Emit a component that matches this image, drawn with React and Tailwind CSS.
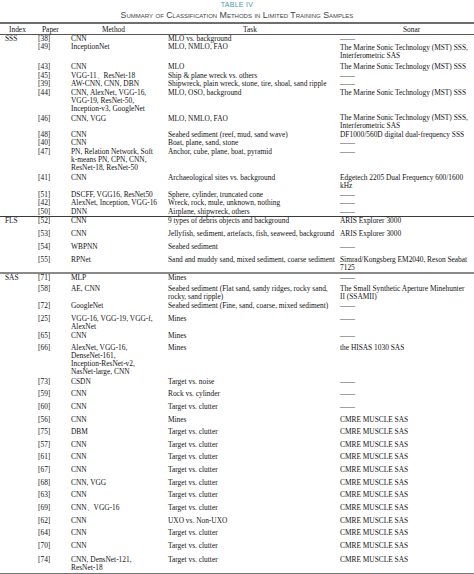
const SECTIONS = [
    {
        index: 'SSS',
        rule: 'h-px bg-[#3a3a3a]',
        rows: [
            { h: 'h-[8px]', p: '[38]', m: ['CNN'], t: ['MLO vs. background'], s: ['——'] },
            { h: 'h-[20px]', p: '[49]', m: ['InceptionNet'], t: ['MLO, NMLO, FAO'], s: ['The Marine Sonic Technology (MST) SSS,', 'Interferometric SAS'], sTop: 'pt-[1px]' },
            { h: 'h-[9px]', p: '[43]', m: ['CNN'], t: ['MLO'], s: ['The Marine Sonic Technology (MST) SSS'] },
            { h: 'h-[8px]', p: '[45]', m: ['VGG-11、ResNet-18'], t: ['Ship & plane wreck vs. others'], s: ['——'] },
            { h: 'h-[9px]', p: '[39]', m: ['AW-CNN, CNN, DBN'], t: ['Shipwreck, plain wreck, stone, tire, shoal, sand ripple'], s: ['——'] },
            { h: 'h-[26px]', p: '[44]', m: ['CNN, AlexNet, VGG-16,', 'VGG-19, ResNet-50,', 'Inception-v3, GoogleNet'], t: ['MLO, OSO, background'], s: ['The Marine Sonic Technology (MST) SSS'] },
            { h: 'h-[16px]', p: '[46]', m: ['CNN, VGG'], t: ['MLO, NMLO, FAO'], s: ['The Marine Sonic Technology (MST) SSS,', 'Interferometric SAS'], sTop: '-mt-[1px]' },
            { h: 'h-[8px]', p: '[48]', m: ['CNN'], t: ['Seabed sediment (reef, mud, sand wave)'], s: ['DF1000/560D digital dual-frequency SSS'] },
            { h: 'h-[9px]', p: '[40]', m: ['CNN'], t: ['Boat, plane, sand, stone'], s: ['——'] },
            { h: 'h-[26px]', p: '[47]', m: ['PN, Relation Network, Soft', 'k-means PN, CPN, CNN,', 'ResNet-18, ResNet-50'], t: ['Anchor, cube, plane, boat, pyramid'], s: ['——'] },
            { h: 'h-[17px]', p: '[41]', m: ['CNN'], t: ['Archaeological sites vs. background'], s: ['Edgetech 2205 Dual Frequency 600/1600', 'kHz'] },
            { h: 'h-[8px]', p: '[51]', m: ['DSCFF, VGG16, ResNet50'], t: ['Sphere, cylinder, truncated cone'], s: ['——'] },
            { h: 'h-[9px]', p: '[42]', m: ['AlexNet, Inception, VGG-16'], t: ['Wreck, rock, mule, unknown, nothing'], s: ['——'] },
            { h: 'h-[8px]', p: '[50]', m: ['DNN'], t: ['Airplane, shipwreck, others'], s: ['——'] },
        ],
    },
    {
        index: 'FLS',
        rule: 'h-[2px] bg-[#8a8a8a]',
        rows: [
            { h: 'h-[13px]', p: '[52]', m: ['CNN'], t: ['9 types of debris objects and background'], s: ['ARIS Explorer 3000'] },
            { h: 'h-[13px]', p: '[53]', m: ['CNN'], t: ['Jellyfish, sediment, artefacts, fish, seaweed, background'], s: ['ARIS Explorer 3000'] },
            { h: 'h-[13px]', p: '[54]', m: ['WBPNN'], t: ['Seabed sediment'], s: ['——'] },
            { h: 'h-[16px]', p: '[55]', m: ['RPNet'], t: ['Sand and muddy sand, mixed sediment, coarse sediment'], s: ['Simrad/Kongsberg EM2040, Reson Seabat', '7125'] },
        ],
    },
    {
        index: 'SAS',
        rule: 'h-[2px] bg-[#777]',
        rows: [
            { h: 'h-[11px]', p: '[71]', m: ['MLP'], t: ['Mines'], s: ['——'] },
            { h: 'h-[17px]', p: '[58]', m: ['AE, CNN'], t: ['Seabed sediment (Flat sand, sandy ridges, rocky sand,', 'rocky, sand ripple)'], s: ['The Small Synthetic Aperture Minehunter', 'II (SSAMII)'] },
            { h: 'h-[13px]', p: '[72]', m: ['GoogleNet'], t: ['Seabed sediment (Fine, sand, coarse, mixed sediment)'], s: ['——'] },
            { h: 'h-[17px]', p: '[25]', m: ['VGG-16, VGG-19, VGG-f,', 'AlexNet'], t: ['Mines'], s: ['——'] },
            { h: 'h-[12px]', p: '[65]', m: ['CNN'], t: ['Mines'], s: ['——'] },
            { h: 'h-[34px]', p: '[66]', m: ['AlexNet, VGG-16,', 'DenseNet-161,', 'Inception-ResNet-v2,', 'NasNet-large, CNN'], t: ['Mines'], s: ['the HISAS 1030 SAS'] },
            { h: 'h-[12px]', p: '[73]', m: ['CSDN'], t: ['Target vs. noise'], s: ['——'] },
            { h: 'h-[13px]', p: '[59]', m: ['CNN'], t: ['Rock vs. cylinder'], s: ['——'] },
            { h: 'h-[13px]', p: '[60]', m: ['CNN'], t: ['Target vs. clutter'], s: ['——'] },
            { h: 'h-[12px]', p: '[56]', m: ['CNN'], t: ['Mines'], s: ['CMRE MUSCLE SAS'] },
            { h: 'h-[13px]', p: '[75]', m: ['DBM'], t: ['Target vs. clutter'], s: ['CMRE MUSCLE SAS'] },
            { h: 'h-[12px]', p: '[57]', m: ['CNN'], t: ['Target vs. clutter'], s: ['CMRE MUSCLE SAS'] },
            { h: 'h-[13px]', p: '[61]', m: ['CNN'], t: ['Target vs. clutter'], s: ['CMRE MUSCLE SAS'] },
            { h: 'h-[13px]', p: '[67]', m: ['CNN'], t: ['Target vs. clutter'], s: ['CMRE MUSCLE SAS'] },
            { h: 'h-[12px]', p: '[68]', m: ['CNN, VGG'], t: ['Target vs. clutter'], s: ['CMRE MUSCLE SAS'] },
            { h: 'h-[13px]', p: '[63]', m: ['CNN'], t: ['Target vs. clutter'], s: ['CMRE MUSCLE SAS'] },
            { h: 'h-[13px]', p: '[69]', m: ['CNN、VGG-16'], t: ['Target vs. clutter'], s: ['CMRE MUSCLE SAS'] },
            { h: 'h-[12px]', p: '[62]', m: ['CNN'], t: ['UXO vs. Non-UXO'], s: ['CMRE MUSCLE SAS'] },
            { h: 'h-[13px]', p: '[64]', m: ['CNN'], t: ['Target vs. clutter'], s: ['CMRE MUSCLE SAS'] },
            { h: 'h-[14px]', p: '[70]', m: ['CNN'], t: ['Target vs. clutter'], s: ['CMRE MUSCLE SAS'] },
            { h: 'h-[17px]', p: '[74]', m: ['CNN, DensNet-121,', 'ResNet-18'], t: ['Target vs. clutter'], s: ['CMRE MUSCLE SAS'] },
        ],
    },
];

const GRID = 'grid grid-cols-[38px_33px_97px_172px_1fr]';

export default function App() {
    return (
        <div className="h-[574px] w-[474px] overflow-hidden bg-white font-['Liberation_Serif','Times_New_Roman',serif] text-[7.4px] leading-[8px] text-[#141414]">
            <header className="pt-[1px] text-center font-['Liberation_Sans',Arial,sans-serif]">
                <div className="text-[7px] leading-[8px] tracking-[0.3px] text-[#3e9ea3]">TABLE IV</div>
                <div className="mt-[2px] text-[8.8px] leading-[9px] text-[#444] [font-variant-caps:small-caps]">
                    Summary of Classification Methods in Limited Training Samples
                </div>
            </header>

            <div className="mt-[2px] h-[2px] bg-[#6e6e6e]" />

            <div className={`${GRID} h-[10px] items-center pt-[1px]`}>
                <span className="pl-[9px]">Index</span>
                <span className="pl-[4px]">Paper</span>
                <span className="pl-[31px]">Method</span>
                <span className="pl-[75px]">Task</span>
                <span className="pl-[63px]">Sonar</span>
            </div>
            <div className="h-px bg-[#555]" />

            {SECTIONS.map((section) => (
                <section key={section.index}>
                    {section.rows.map((row, i) => (
                        <TableRow key={row.p} row={row} label={i === 0 ? section.index : ''} />
                    ))}
                    <div className={section.rule} />
                </section>
            ))}
        </div>
    );
}

function TableRow({ row, label }) {
    return (
        <div className={`${GRID} ${row.h} overflow-visible`}>
            <span className="pl-[5px]">{label}</span>
            <span>{row.p}</span>
            <Lines lines={row.m} />
            <Lines lines={row.t} />
            <Lines lines={row.s} className={row.sTop} />
        </div>
    );
}

function Lines({ lines, className = '' }) {
    return (
        <div className={`whitespace-nowrap ${className}`}>
            {lines.map((line, index) => (
                <div key={index} className="h-[8px]">{line}</div>
            ))}
        </div>
    );
}
